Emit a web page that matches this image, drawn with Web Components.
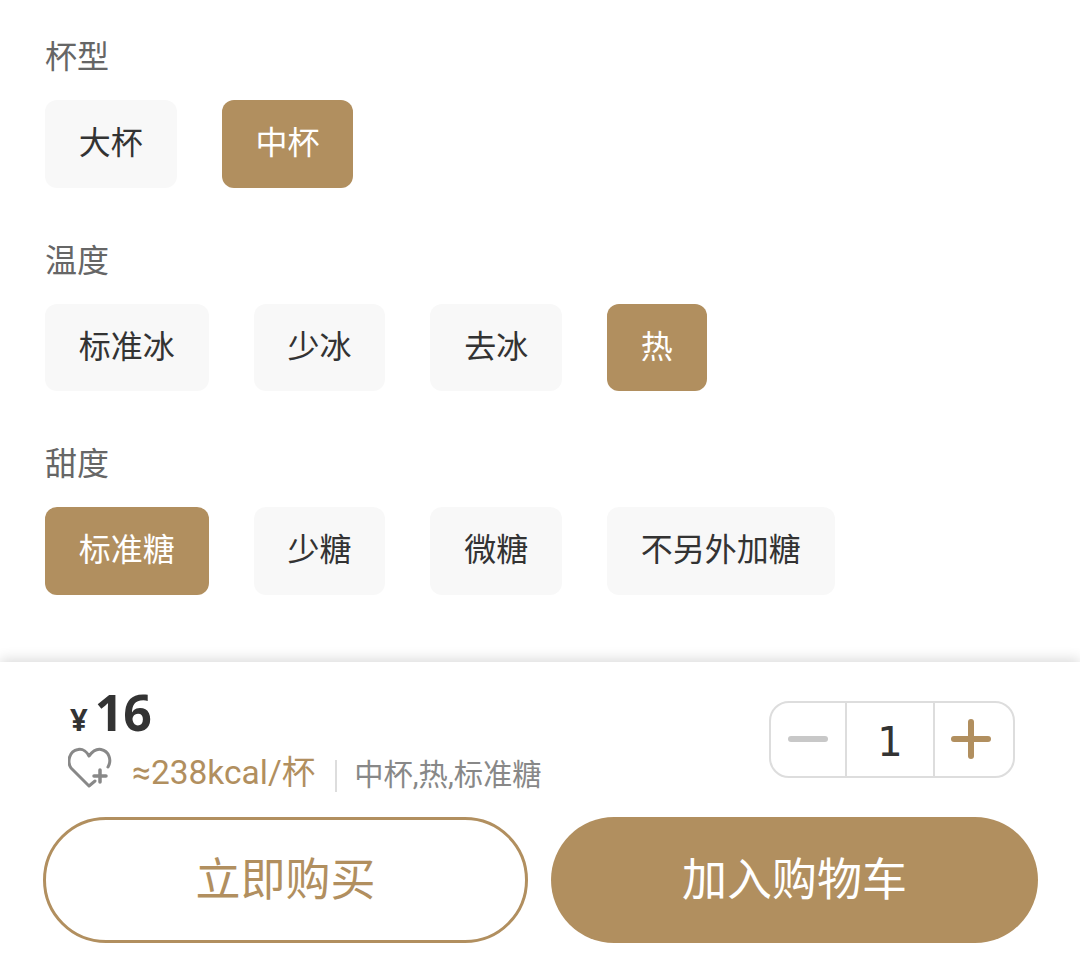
<!DOCTYPE html>
<html lang="zh">
<head>
<meta charset="utf-8">
<title>商品规格</title>
<style>
  html, body { margin: 0; padding: 0; background: #fff; }
  body {
    width: 1080px;
    height: 966px;
    overflow: hidden;
    font-family: Roboto, 'Noto Sans CJK SC', sans-serif;
  }
</style>
</head>
<body>
<spec-panel>
  <option-group label="杯型">
    <option-chip>大杯</option-chip>
    <option-chip selected>中杯</option-chip>
  </option-group>
  <option-group label="温度">
    <option-chip>标准冰</option-chip>
    <option-chip>少冰</option-chip>
    <option-chip>去冰</option-chip>
    <option-chip selected>热</option-chip>
  </option-group>
  <option-group label="甜度">
    <option-chip selected>标准糖</option-chip>
    <option-chip>少糖</option-chip>
    <option-chip>微糖</option-chip>
    <option-chip>不另外加糖</option-chip>
  </option-group>
</spec-panel>
<buy-bar price="16" kcal="≈238kcal/杯" summary="中杯,热,标准糖" quantity="1"></buy-bar>

<script>
const GOLD = '#b18f5f';

class SpecPanel extends HTMLElement {
  constructor() {
    super();
    this.attachShadow({ mode: 'open' }).innerHTML = `
      <style>
        :host {
          display: flex;
          flex-direction: column;
          gap: 51px;
          box-sizing: border-box;
          height: 662px;
          padding: 35px 0 0 45px;
        }
      </style>
      <slot></slot>`;
  }
}

class OptionGroup extends HTMLElement {
  constructor() {
    super();
    this.attachShadow({ mode: 'open' }).innerHTML = `
      <style>
        :host { display: block; }
        .label {
          height: 44px;
          line-height: 44px;
          font-size: 32px;
          color: #666;
          margin-bottom: 21px;
        }
        .chips { display: flex; gap: 45.2px; }
      </style>
      <div class="label"></div>
      <div class="chips"><slot></slot></div>`;
    this.shadowRoot.querySelector('.label').textContent = this.getAttribute('label');
  }
}

class OptionChip extends HTMLElement {
  constructor() {
    super();
    this.attachShadow({ mode: 'open' }).innerHTML = `
      <style>
        :host {
          display: flex;
          align-items: center;
          justify-content: center;
          box-sizing: border-box;
          height: 87.5px;
          padding: 0 33.75px 7px;
          border-radius: 12px;
          background: #f8f8f8;
          color: #333;
          font-size: 32px;
        }
        :host([selected]) { background: ${GOLD}; color: #fff; }
      </style>
      <slot></slot>`;
  }
}

class QtyStepper extends HTMLElement {
  constructor() {
    super();
    this.attachShadow({ mode: 'open' }).innerHTML = `
      <style>
        :host {
          display: grid;
          grid-template-columns: 74px 90px 1fr;
          box-sizing: border-box;
          width: 246px;
          height: 77px;
          border: 2px solid #ddd;
          border-radius: 20px;
        }
        div { display: flex; align-items: center; justify-content: center; }
        .num {
          box-sizing: border-box;
          padding-top: 4px;
          border-left: 2px solid #ddd;
          border-right: 2px solid #ddd;
          font-size: 40px;
          color: #333;
          font-family: 'DejaVu Sans', sans-serif;
        }
        .plus { padding-right: 6px; }
        svg { width: 40px; height: 40px; display: block; margin-top: -2px; }
        line { stroke-width: 6; stroke-linecap: round; }
      </style>
      <div><svg viewBox="0 0 40 40"><line x1="3" y1="20" x2="37" y2="20" stroke="#c8c8c8"/></svg></div>
      <div class="num"><slot></slot></div>
      <div class="plus"><svg viewBox="0 0 40 40"><g stroke="${GOLD}"><line x1="3" y1="20" x2="37" y2="20"/><line x1="20" y1="3" x2="20" y2="37"/></g></svg></div>`;
  }
}

class BuyBar extends HTMLElement {
  constructor() {
    super();
    this.attachShadow({ mode: 'open' }).innerHTML = `
      <style>
        :host {
          display: block;
          position: relative;
          box-sizing: border-box;
          height: 304px;
          padding: 0 42px 0 43px;
          background: #fff;
          box-shadow: 0 -3px 12px rgba(0,0,0,0.14);
        }
        .top {
          display: flex;
          justify-content: space-between;
          height: 155px;
          box-sizing: border-box;
          padding: 20px 23px 0 25px;
        }
        .price {
          display: flex;
          align-items: baseline;
          height: 60px;
          padding-left: 2px;
          color: #333;
          font-weight: 700;
          font-family: 'Noto Sans', sans-serif;
        }
        .price .cur { font-size: 31px; margin-right: 7px; }
        .price .val { font-size: 50px; line-height: 60px; }
        .meta {
          display: flex;
          align-items: center;
          height: 44px;
          margin-top: 8px;
          white-space: nowrap;
        }
        .meta svg { width: 46px; height: 44px; display: block; margin: -8px 18px 0 0; flex: none; }
        .kcal { font-size: 33.5px; color: ${GOLD}; padding-bottom: 6px; }
        .sep { width: 2px; height: 32px; background: #ddd; margin: 8px 17px 0 20px; }
        .summary { font-size: 29.3px; color: #888; }
        qty-stepper { margin-top: 19px; }
        .actions { display: flex; gap: 23px; }
        button {
          height: 126px;
          border-radius: 63px;
          box-sizing: border-box;
          font: inherit;
          font-size: 45px;
          padding: 0 0 7px;
        }
        .buy { flex: 0 0 485px; background: #fff; color: ${GOLD}; border: 3px solid ${GOLD}; }
        .cart { flex: 0 0 487px; background: ${GOLD}; color: #fff; border: 0; }
      </style>
      <div class="top">
        <div>
          <div class="price"><span class="cur">¥</span><span class="val"></span></div>
          <div class="meta">
            <svg viewBox="0 0 46 44" fill="none" stroke="#888" stroke-width="3" stroke-linecap="round" stroke-linejoin="round">
              <path d="M27 35 L21 40 L3 22 C-1 16 1 5 10 3.500 C15 2.500 19 6 21 10 C24 6 28 2.500 33 3.500 C41 5 44 14 40 21"/>
              <path d="M26 30 H38 M32 24 V36" stroke-width="3.500"/>
            </svg>
            <span class="kcal"></span>
            <span class="sep"></span>
            <span class="summary"></span>
          </div>
        </div>
        <qty-stepper></qty-stepper>
      </div>
      <div class="actions">
        <button class="buy">立即购买</button>
        <button class="cart">加入购物车</button>
      </div>`;
    const root = this.shadowRoot;
    root.querySelector('.val').textContent = this.getAttribute('price');
    root.querySelector('.kcal').textContent = this.getAttribute('kcal');
    root.querySelector('.summary').textContent = this.getAttribute('summary');
    root.querySelector('qty-stepper').textContent = this.getAttribute('quantity');
  }
}

customElements.define('spec-panel', SpecPanel);
customElements.define('option-group', OptionGroup);
customElements.define('option-chip', OptionChip);
customElements.define('qty-stepper', QtyStepper);
customElements.define('buy-bar', BuyBar);
</script>
</body>
</html>
